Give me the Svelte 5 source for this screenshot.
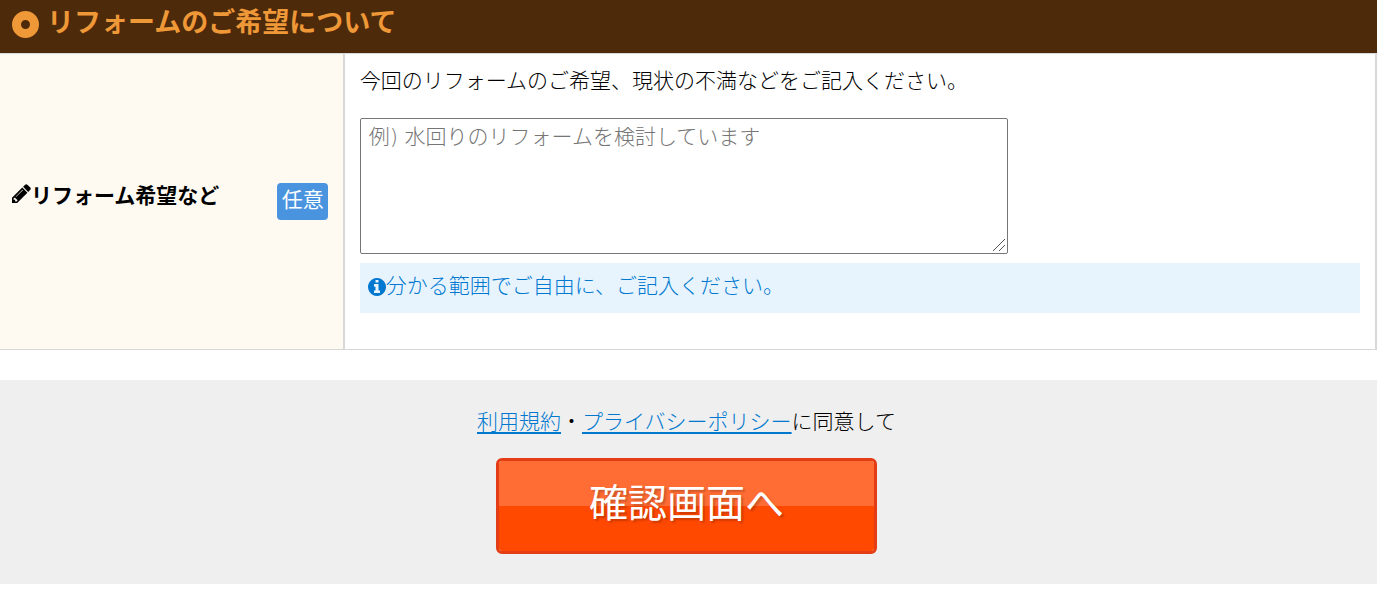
<script>
  let wish = $state('');
  const submit = (event) => event.preventDefault();
</script>

<form onsubmit={submit}>
  <h2>
    <svg class="ring" viewBox="0 0 27 27" aria-hidden="true">
      <circle cx="13.5" cy="13.5" r="9" fill="none" stroke="currentColor" stroke-width="9" />
    </svg>
    <span>リフォームのご希望について</span>
  </h2>

  <div class="row">
    <div class="head">
      <label for="wish">
        <svg class="pencil" viewBox="0 0 1536 1536" aria-hidden="true">
          <path fill="currentColor" d="M363 1408l91-91-235-235-91 91v107h128v128h107zM886 480q0-22-22-22-10 0-17 7l-542 542q-7 7-7 17 0 22 22 22 10 0 17-7l542-542q7-7 7-17zM832 288l416 416-832 832H0v-416zM1515 384q0 53-37 90l-166 166-416-416 166-165q36-38 90-38 53 0 91 38l235 234q37 39 37 91z" />
        </svg><span>リフォーム希望など</span>
      </label>
      <span class="badge">任意</span>
    </div>
    <div class="field">
      <p class="lead">今回のリフォームのご希望、現状の不満などをご記入ください。</p>
      <textarea id="wish" bind:value={wish} placeholder="例) 水回りのリフォームを検討しています"></textarea>
      <p class="note">
        <svg class="info" viewBox="0 0 1536 1536" aria-hidden="true">
          <path fill="currentColor" d="M1024 1248v-160q0-14-9-23t-23-9h-96V544q0-14-9-23t-23-9H544q-14 0-23 9t-9 23v160q0 14 9 23t23 9h96v320h-96q-14 0-23 9t-9 23v160q0 14 9 23t23 9h448q14 0 23-9t9-23zM896 352V192q0-14-9-23t-23-9H672q-14 0-23 9t-9 23v160q0 14 9 23t23 9h192q14 0 23-9t9-23zM1536 768q0 209-103 385.500T1153.500 1433 768 1536t-385.500-103T103 1153.500 0 768t103-385.500T382.500 103 768 0t385.500 103T1433 382.500 1536 768z" />
        </svg><span>分かる範囲でご自由に、ご記入ください。</span>
      </p>
    </div>
  </div>

  <div class="submit">
    <p><a href="#terms">利用規約</a>・<a href="#privacy">プライバシーポリシー</a>に同意して</p>
    <button type="submit">確認画面へ</button>
  </div>
</form>

<style>
  :global(body) {
    background: #fff;
  }

  form {
    margin-right: 10px;
    color: #000;
    font-family: 'Noto Sans CJK JP', sans-serif;
    font-size: 21px;
    font-weight: 300;
    line-height: 32px;
  }

  h2 {
    display: flex;
    align-items: center;
    gap: 8px;
    margin: 0;
    padding: 0 12px 11px;
    background: #4d2a0a;
    color: #ef9838;
    font-size: 27px;
    font-weight: 700;
    line-height: 42px;
  }

  .ring {
    width: 27px;
    height: 27px;
    margin-top: 6px;
  }

  .row {
    display: grid;
    grid-template-columns: calc(25% + 1px) 1fr;
    border: solid #d8d8d8;
    border-width: 1px 2px 1px 0;
  }

  .head {
    display: flex;
    align-items: center;
    justify-content: space-between;
    padding: 0 15px 0 12px;
    border-right: 2px solid #d8d8d8;
    background: #fffaf1;
  }

  label {
    display: flex;
    align-items: center;
    padding-bottom: 16px;
    font-weight: 700;
  }

  .pencil {
    width: 19px;
    height: 19px;
  }

  .badge {
    padding: 0 4px 7px 5px;
    border-radius: 4px;
    background: #4a94df;
    color: #fff;
    font-weight: 400;
    line-height: 30px;
  }

  .field {
    padding: 9px 15px 36px;
  }

  p {
    margin: 0;
  }

  .lead {
    margin-bottom: 23px;
  }

  textarea {
    display: block;
    box-sizing: border-box;
    width: 648px;
    max-width: 100%;
    height: 136px;
    margin: 0;
    padding: 2px 8px;
    border: 1px solid #767676;
    border-radius: 2px;
    background: #fff;
    color: #000;
    font: inherit;
    font-family: 'DejaVu Sans', 'Noto Sans CJK JP', sans-serif;
    resize: both;
  }

  textarea::placeholder {
    color: #757575;
  }

  textarea::-webkit-resizer {
    background: url("data:image/svg+xml,%3Csvg xmlns='http://www.w3.org/2000/svg' width='15' height='15'%3E%3Cpath d='M1 13L13 1M7 13L13 7' stroke='%23555'/%3E%3C/svg%3E") no-repeat;
  }

  .note {
    display: flex;
    align-items: center;
    margin-top: 9px;
    padding: 5px 8px 13px;
    background: #e7f4fe;
    color: #0078d0;
  }

  .info {
    width: 18px;
    height: 18px;
    margin-top: 5px;
  }

  .submit {
    display: flex;
    flex-direction: column;
    align-items: center;
    gap: 22px;
    margin-top: 30px;
    padding: 24px 12px 30px 8px;
    background: #efefef;
  }

  a {
    color: #0078d0;
    text-decoration: underline 2px;
    text-underline-offset: 3px;
  }

  button {
    box-sizing: border-box;
    height: 96px;
    padding: 0 90px 12px;
    border: 3px solid #e43c14;
    border-radius: 6px;
    background: linear-gradient(#ff6c34 50%, #ff4800 50%) padding-box;
    color: #fff;
    font: inherit;
    font-size: 39px;
    font-weight: 400;
    line-height: 56px;
    text-shadow: 2px 2px 2px rgb(0 0 0 / 20%);
    cursor: pointer;
  }
</style>
